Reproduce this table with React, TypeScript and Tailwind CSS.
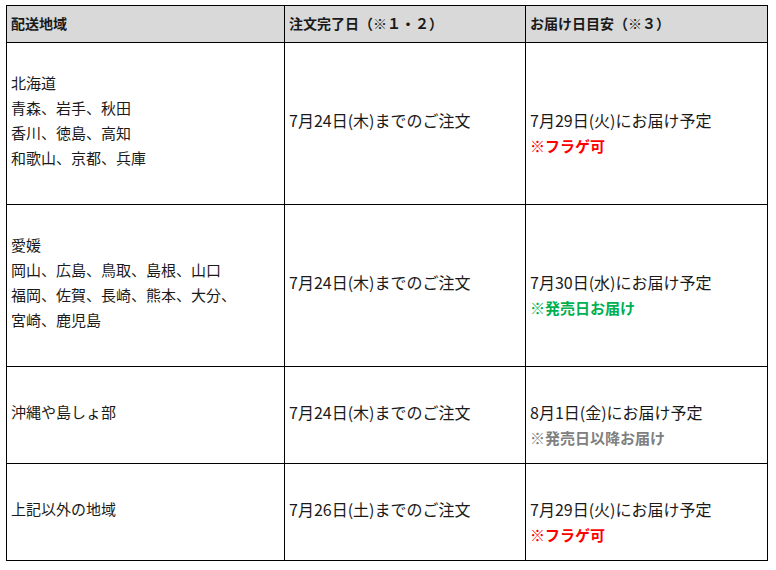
import { FC } from "react";

type Row = {
  areas: string[];
  deadline: string;
  delivery: string;
  note: string;
  noteColor: string;
  height: string;
};

const rows: Row[] = [
  {
    areas: ["北海道", "青森、岩手、秋田", "香川、徳島、高知", "和歌山、京都、兵庫"],
    deadline: "7月24日(木)までのご注文",
    delivery: "7月29日(火)にお届け予定",
    note: "※フラゲ可",
    noteColor: "text-[#ff0000]",
    height: "h-[162px]",
  },
  {
    areas: ["愛媛", "岡山、広島、鳥取、島根、山口", "福岡、佐賀、長崎、熊本、大分、", "宮崎、鹿児島"],
    deadline: "7月24日(木)までのご注文",
    delivery: "7月30日(水)にお届け予定",
    note: "※発売日お届け",
    noteColor: "text-[#00b050]",
    height: "h-[162px]",
  },
  {
    areas: ["沖縄や島しょ部"],
    deadline: "7月24日(木)までのご注文",
    delivery: "8月1日(金)にお届け予定",
    note: "※発売日以降お届け",
    noteColor: "text-[#808080]",
    height: "h-[97px]",
  },
  {
    areas: ["上記以外の地域"],
    deadline: "7月26日(土)までのご注文",
    delivery: "7月29日(火)にお届け予定",
    note: "※フラゲ可",
    noteColor: "text-[#ff0000]",
    height: "h-[97px]",
  },
];

const App: FC = () => {
  return (
    <div
      className="w-[776px] h-[570px] bg-white pt-[5px] pl-[6px] text-[#1a1a1a]"
      style={{ fontFamily: '"Noto Sans CJK JP", "Noto Sans", sans-serif' }}
    >
      <table className="border-collapse table-fixed w-[761px]">
        <colgroup>
          <col className="w-[278px]" />
          <col className="w-[241px]" />
          <col className="w-[242px]" />
        </colgroup>
        <thead>
          <tr className="h-[37px] bg-[#d9d9d9]">
            <th className="border border-black px-[4px] pb-[2px] text-left text-[14px] font-bold">配送地域</th>
            <th className="border border-black px-[4px] pb-[2px] text-left text-[14px] font-bold">注文完了日（※１・２）</th>
            <th className="border border-black px-[4px] pb-[2px] text-left text-[14px] font-bold">お届け日目安（※３）</th>
          </tr>
        </thead>
        <tbody>
          {rows.map((row, i) => (
            <tr key={i} className={row.height}>
              <td className="border border-black px-[4px] pb-[7px] align-middle text-[15px] leading-[25px]">
                {row.areas.map((a) => (
                  <div key={a} className="whitespace-nowrap">{a}</div>
                ))}
              </td>
              <td className="border border-black px-[4px] pb-[7px] align-middle text-[16px] leading-[26px]">
                {row.deadline}
              </td>
              <td className="border border-black px-[4px] pb-[7px] align-middle leading-[26px]">
                <div className="h-[26px]" />
                <div className="text-[16px]">{row.delivery}</div>
                <div className={`text-[15px] font-bold ${row.noteColor}`}>{row.note}</div>
              </td>
            </tr>
          ))}
        </tbody>
      </table>
    </div>
  );
};

export default App;
